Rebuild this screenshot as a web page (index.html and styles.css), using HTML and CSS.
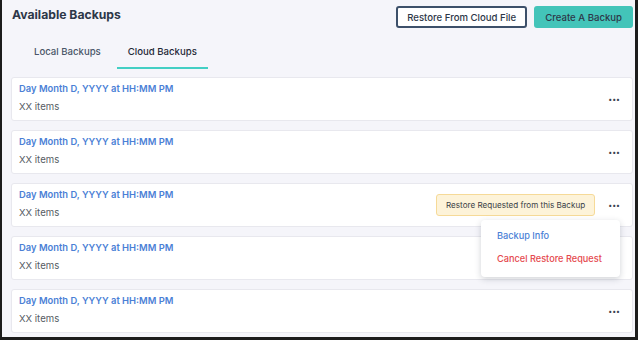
FILE: index.html
```html
<!DOCTYPE html>
<html>
<head>
  <title>Available Backups</title>
  <link rel="stylesheet" href="styles.css">
</head>
<body>
  <div class="frame">
    <div class="header">
      <h1>Available Backups</h1>
      <div class="actions">
        <button class="btn btn-outline">Restore From Cloud File</button>
        <button class="btn btn-primary">Create A Backup</button>
      </div>
    </div>

    <ul class="tabs">
      <li>Local Backups</li>
      <li class="active">Cloud Backups</li>
    </ul>

    <div class="list">
      <div class="card">
        <div class="info">
          <div class="date">Day Month D, YYYY at HH:MM PM</div>
          <div class="count">XX items</div>
        </div>
        <div class="more">&bull;&bull;&bull;</div>
      </div>
      <div class="card">
        <div class="info">
          <div class="date">Day Month D, YYYY at HH:MM PM</div>
          <div class="count">XX items</div>
        </div>
        <div class="more">&bull;&bull;&bull;</div>
      </div>
      <div class="card">
        <div class="info">
          <div class="date">Day Month D, YYYY at HH:MM PM</div>
          <div class="count">XX items</div>
        </div>
        <div class="badge">Restore Requested from this Backup</div>
        <div class="more">&bull;&bull;&bull;</div>
        <div class="menu">
          <a class="menu-item">Backup Info</a>
          <a class="menu-item danger">Cancel Restore Request</a>
        </div>
      </div>
      <div class="card">
        <div class="info">
          <div class="date">Day Month D, YYYY at HH:MM PM</div>
          <div class="count">XX items</div>
        </div>
        <div class="more">&bull;&bull;&bull;</div>
      </div>
      <div class="card">
        <div class="info">
          <div class="date">Day Month D, YYYY at HH:MM PM</div>
          <div class="count">XX items</div>
        </div>
        <div class="more">&bull;&bull;&bull;</div>
      </div>
    </div>
  </div>
</body>
</html>
```

FILE: styles.css
```css
body {
  margin: 0;
  background-color: #1c1c1c;
  font-family: Inter, "Noto Sans", sans-serif;
}

.frame {
  margin: 0 3px 0 2px;
  height: 337px;
  background-color: #f5f5fa;
  padding: 0 2px 0 9px;
  box-sizing: border-box;
  overflow: hidden;
}

.header {
  display: flex;
  justify-content: space-between;
  align-items: flex-start;
  padding-top: 6px;
}

h1 {
  margin: 0;
  padding: 1px 0 0 1px;
  font-size: 12.2px;
  font-weight: 700;
  color: #2d3748;
}

.actions {
  display: flex;
  gap: 7px;
}

.btn {
  height: 22px;
  border-radius: 3px;
  font-family: Inter, "Noto Sans", sans-serif;
  font-size: 9.6px;
  font-weight: 500;
  color: #2d3748;
  padding: 0 9px;
  box-sizing: border-box;
}

.btn-outline {
  background: white;
  border: 2px solid #3d506a;
}

.btn-primary {
  background: #43c4b9;
  border: none;
  padding: 0 11px;
}

.tabs {
  list-style: none;
  display: flex;
  gap: 5px;
  margin: 9px 0 0 0;
  padding: 0 0 0 12px;
}

.tabs li {
  padding: 9px 11px 10px;
  font-size: 9.6px;
  font-weight: 500;
  color: #4a5568;
  border-bottom: 2px solid transparent;
}

.tabs li.active {
  color: #1f2937;
  border-bottom-color: #43cfc4;
}

.list {
  display: flex;
  flex-direction: column;
  gap: 9px;
  margin-top: 8px;
}

.card {
  position: relative;
  display: flex;
  align-items: center;
  height: 44px;
  background: white;
  border: 1px solid #e8e8ee;
  border-radius: 3px;
  box-sizing: border-box;
  padding: 0 12px 0 7px;
}

.info {
  flex: 1;
  align-self: flex-start;
  padding-top: 5px;
}

.date {
  font-size: 9.4px;
  font-weight: 600;
  color: #4b7fd6;
  margin-bottom: 7px;
}

.count {
  font-size: 9.6px;
  color: #555b63;
}

.badge {
  background: #fdf3d9;
  border: 1px solid #f6da98;
  border-radius: 3px;
  padding: 5px 9px;
  font-size: 8.1px;
  color: #3a3f47;
  margin-right: 13px;
}

.more {
  font-size: 7px;
  color: #3a4250;
}

.menu {
  position: absolute;
  top: 36px;
  right: 12px;
  width: 139px;
  background: white;
  border-radius: 4px;
  box-shadow: 0 2px 6px rgba(40, 50, 70, 0.22);
  padding: 5px 0 6px;
  box-sizing: border-box;
  z-index: 2;
}

.menu-item {
  display: block;
  padding: 5px 16px 7px;
  font-size: 9.2px;
  font-weight: 500;
  white-space: nowrap;
  color: #4b7fd6;
}

.menu-item.danger {
  color: #e5484d;
}
```
